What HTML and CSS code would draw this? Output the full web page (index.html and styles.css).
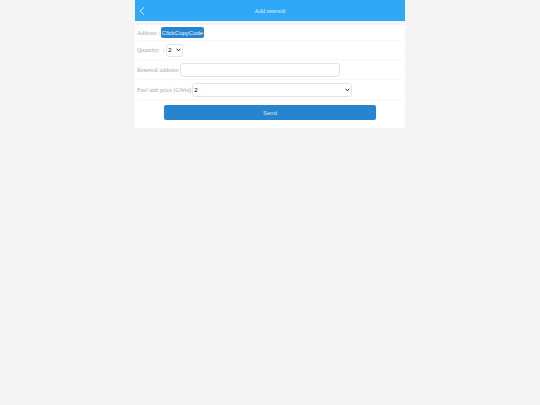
FILE: index.html
```html
<!DOCTYPE html>
<html lang="en">
<head>
<meta charset="utf-8">
<title>Add renewal</title>
<link rel="stylesheet" href="styles.css">
</head>
<body>
<div class="page">
  <header class="header">
    <a class="back" href="#" aria-label="Back"><svg viewBox="0 0 6 8"><path d="M5 .3 1.1 4 5 7.7"/></svg></a>
    <h1 class="title">Add renewal</h1>
  </header>
  <form class="form">
    <div class="row row-first">
      <span>Address :</span>
      <button class="copy" type="button">ClickCopyCode</button>
    </div>
    <div class="row">
      <label for="quantity">Quantity: &nbsp;:</label>
      <span class="picker picker-small">
        <select id="quantity"><option>2</option></select>
        <svg class="arrow" viewBox="0 0 5 4"><path d="M.7 .8 2.5 2.8 4.3 .8"/></svg>
      </span>
    </div>
    <div class="row row-field">
      <label for="address">Renewal address:</label>
      <input class="field" id="address" type="text">
    </div>
    <div class="row row-field">
      <label for="price">Fuel unit price (GWei)</label>
      <span class="picker field">
        <select id="price"><option>2</option></select>
        <svg class="arrow" viewBox="0 0 5 4"><path d="M.7 .8 2.5 2.8 4.3 .8"/></svg>
      </span>
    </div>
    <button class="send" type="submit">Send</button>
  </form>
</div>
</body>
</html>
```
FILE: styles.css
```css
* {
  box-sizing: border-box;
}

body {
  margin: 0;
  background: #f4f4f4;
  font: 6px/8px "Liberation Serif", serif;
  color: #a8a8a8;
}

.page {
  width: 50%;
  margin: 0 auto;
}

.header {
  display: grid;
  grid-template-columns: 14px 1fr 14px;
  align-items: center;
  height: 21px;
  background: #2fa8f8;
  color: #e2f3ff;
}

.back {
  display: flex;
  justify-content: center;
  padding-top: 1px;
}

.back svg {
  width: 6px;
  height: 8px;
}

.back path {
  fill: none;
  stroke: #d3edff;
  stroke-width: 1;
}

.title {
  margin: 0;
  font-size: 6px;
  font-weight: 400;
  text-align: center;
}

.form {
  margin-top: 4px;
  padding: 0 2px 8px;
  background: #fff;
}

.row {
  display: flex;
  align-items: center;
  gap: 1px;
  min-height: 19px;
  border-bottom: 1px solid #f8f8f8;
}

.row-first {
  min-height: 16px;
}

.row-field {
  min-height: 20px;
}

button,
input,
select {
  margin: 0;
  font: 6px/8px "Liberation Sans", sans-serif;
}

.copy {
  height: 11px;
  padding: 0 1px;
  border: 0;
  border-radius: 2px;
  background: #2785d0;
  color: #e8f4ff;
}

.field {
  width: 60%;
  height: 14px;
  border: 1px solid #e4e4e4;
  border-radius: 3px;
  background: #fff;
}

.picker {
  position: relative;
  display: flex;
}

.picker-small {
  width: 17px;
  height: 13px;
  margin-left: 1px;
  border: 1px solid #e4e4e4;
  border-radius: 3px;
}

select {
  width: 100%;
  padding: 0 1px;
  border: 0;
  background: transparent;
  color: #000;
  appearance: none;
}

.arrow {
  position: absolute;
  top: 50%;
  right: 1px;
  width: 5px;
  height: 4px;
  margin-top: -2px;
  pointer-events: none;
}

.arrow path {
  fill: none;
  stroke: #222;
  stroke-width: 1;
}

.send {
  display: block;
  width: 80%;
  height: 15px;
  margin: 5px auto 0;
  border: 0;
  border-radius: 2px;
  background: #2785d0;
  color: #d4e9fb;
}
```
